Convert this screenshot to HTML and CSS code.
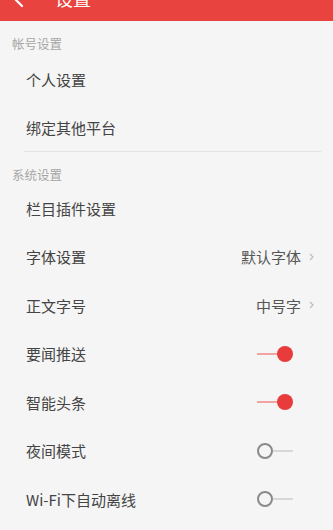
FILE: index.html
```html
<!DOCTYPE html>
<html lang="zh-CN">
<head>
    <meta charset="UTF-8">
    <meta name="viewport" content="width=device-width, initial-scale=1.0">
    <title>设置</title>
    <link rel="stylesheet" href="styles.css">
</head>
<body>
    <div class="header">
        <svg class="back" width="20" height="20" viewBox="0 0 20 20">
            <path d="M18 10H3M10 3L3 10L10 17" fill="none" stroke="#fff" stroke-width="2.2" stroke-linecap="round" stroke-linejoin="round"/>
        </svg>
        <span class="title">设置</span>
    </div>

    <div class="section-title first">帐号设置</div>
    <div class="row">个人设置</div>
    <div class="row">绑定其他平台</div>
    <div class="divider"></div>

    <div class="section-title">系统设置</div>
    <div class="row item">栏目插件设置</div>
    <div class="row item">
        <span>字体设置</span>
        <span class="value">默认字体
            <svg width="5" height="8" viewBox="0 0 5 8"><path d="M1 1L4 4L1 7" fill="none" stroke="#bbb" stroke-width="1.1"/></svg>
        </span>
    </div>
    <div class="row item">
        <span>正文字号</span>
        <span class="value">中号字
            <svg width="5" height="8" viewBox="0 0 5 8"><path d="M1 1L4 4L1 7" fill="none" stroke="#bbb" stroke-width="1.1"/></svg>
        </span>
    </div>
    <div class="row item">
        <span>要闻推送</span>
        <span class="switch on"><span class="track"></span><span class="knob"></span></span>
    </div>
    <div class="row item">
        <span>智能头条</span>
        <span class="switch on"><span class="track"></span><span class="knob"></span></span>
    </div>
    <div class="row item">
        <span>夜间模式</span>
        <span class="switch"><span class="track"></span><span class="knob"></span></span>
    </div>
    <div class="row item">
        <span>Wi-Fi下自动离线</span>
        <span class="switch"><span class="track"></span><span class="knob"></span></span>
    </div>
</body>
</html>
```

FILE: styles.css
```css
body {
    margin: 0;
    background: #f5f5f5;
    font-family: "Noto Sans CJK SC", "Noto Sans", sans-serif;
    color: #444;
    overflow: hidden;
}
.header {
    height: 48px;
    margin-top: -27px;
    background: #e94340;
    display: flex;
    align-items: center;
    padding-left: 12px;
}
.back {
    margin-top: 4px;
}
.title {
    margin-left: 23px;
    color: #fff;
    font-size: 18px;
    margin-top: 2px;
}
.section-title {
    font-size: 12.5px;
    line-height: 14px;
    color: #a5a5a5;
    padding: 16px 12px 2px;
}
.section-title.first {
    padding-bottom: 4px;
}
.row {
    height: 48px;
    display: flex;
    align-items: center;
    justify-content: space-between;
    padding: 0 19px 0 26px;
    font-size: 15px;
}
.row.item {
    height: 48.5px;
}
.divider {
    height: 1px;
    background: #e3e3e3;
    margin: 0 12px 0 24px;
}
.value {
    display: flex;
    align-items: center;
    gap: 8px;
    color: #555;
}
.switch {
    display: flex;
    align-items: center;
    flex-direction: row-reverse;
    margin-right: 21px;
}
.switch.on {
    flex-direction: row;
}
.track {
    width: 20px;
    height: 2px;
    background: #d8d8d8;
}
.knob {
    width: 12px;
    height: 12px;
    border: 2px solid #8a8a8a;
    border-radius: 50%;
    background: #f5f5f5;
}
.on .track {
    background: #f0a3a3;
}
.on .knob {
    width: 16px;
    height: 16px;
    border: none;
    background: #e83b3b;
}
```
